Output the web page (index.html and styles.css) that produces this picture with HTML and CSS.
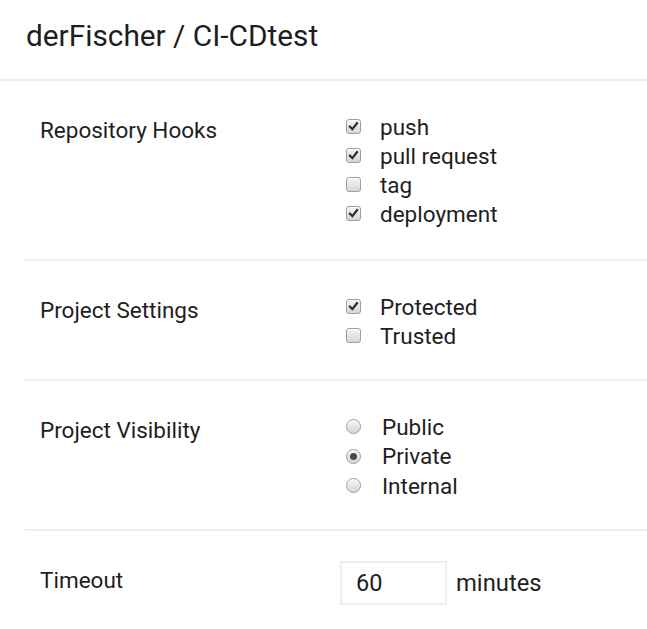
FILE: index.html
```html
<!DOCTYPE html>
<html>
<head>
<meta charset="utf-8">
<link rel="stylesheet" href="styles.css">
</head>
<body>
<header class="header">derFischer / CI-CDtest</header>
<main class="settings">
  <section class="section s-hooks">
    <div class="label">Repository Hooks</div>
    <div class="options">
      <div class="opt"><span class="box"><svg viewBox="0 0 14 14"><path d="M3.2 7.2 L5.8 9.8 L10.8 3.4"/></svg></span><span class="txt">push</span></div>
      <div class="opt"><span class="box"><svg viewBox="0 0 14 14"><path d="M3.2 7.2 L5.8 9.8 L10.8 3.4"/></svg></span><span class="txt">pull request</span></div>
      <div class="opt"><span class="box"></span><span class="txt">tag</span></div>
      <div class="opt"><span class="box"><svg viewBox="0 0 14 14"><path d="M3.2 7.2 L5.8 9.8 L10.8 3.4"/></svg></span><span class="txt">deployment</span></div>
    </div>
  </section>
  <section class="section s-project">
    <div class="label">Project Settings</div>
    <div class="options">
      <div class="opt"><span class="box"><svg viewBox="0 0 14 14"><path d="M3.2 7.2 L5.8 9.8 L10.8 3.4"/></svg></span><span class="txt">Protected</span></div>
      <div class="opt"><span class="box"></span><span class="txt">Trusted</span></div>
    </div>
  </section>
  <section class="section s-vis">
    <div class="label">Project Visibility</div>
    <div class="options">
      <div class="opt radio-opt"><span class="radio"></span><span class="txt">Public</span></div>
      <div class="opt radio-opt"><span class="radio on"></span><span class="txt">Private</span></div>
      <div class="opt radio-opt"><span class="radio"></span><span class="txt">Internal</span></div>
    </div>
  </section>
  <section class="section s-timeout">
    <div class="label">Timeout</div>
    <div class="timeout">
      <div class="input">60</div>
      <span class="unit">minutes</span>
    </div>
  </section>
</main>
</body>
</html>
```

FILE: styles.css
```css
html, body {
  margin: 0;
  padding: 0;
  background: #fff;
}
body {
  font-family: Roboto, "Noto Sans", sans-serif;
  color: #1e1e1e;
  width: 647px;
  overflow: hidden;
}
.header {
  height: 81px;
  box-sizing: border-box;
  padding: 18px 0 0 26px;
  font-size: 29.8px;
  line-height: 36px;
  border-bottom: 2px solid #eceff1;
}
.settings {
  margin-left: 25px;
}
.section {
  display: flex;
  align-items: flex-start;
  box-sizing: border-box;
  padding-top: 31px;
  border-bottom: 2px solid #eceff1;
}
.s-hooks { height: 180px; }
.s-project { height: 120px; }
.s-vis { height: 150px; }
.s-timeout { height: 98px; border-bottom: none; }
.label {
  width: 300px;
  padding-left: 15px;
  margin-top: 3px;
  font-size: 22.5px;
  line-height: 30px;
}
.options {
  display: flex;
  flex-direction: column;
}
.opt {
  display: flex;
  align-items: center;
  height: 29px;
  font-size: 22.5px;
}
.radio-opt { height: 29.5px; }
.box, .radio {
  width: 13px;
  height: 13px;
  border: 1px solid #9e9e9e;
  border-radius: 3px;
  background: linear-gradient(#f5f5f5, #d6d6d6);
  margin-left: 6px;
  margin-right: 19px;
  flex: none;
  display: flex;
  box-shadow: inset 0 1px 0 #fff;
}
.box svg {
  width: 13px;
  height: 13px;
}
.box svg path {
  fill: none;
  stroke: #2e2e2e;
  stroke-width: 2.4;
  stroke-linecap: square;
}
.radio {
  border-radius: 50%;
  margin-right: 21px;
  align-items: center;
  justify-content: center;
}
.radio.on::after {
  content: "";
  width: 7px;
  height: 7px;
  border-radius: 50%;
  background: #4a4a4a;
}
.timeout {
  display: flex;
  align-items: center;
  margin-top: -1px;
}
.input {
  width: 107px;
  height: 44px;
  box-sizing: border-box;
  border: 2px solid #eceff1;
  padding-left: 14px;
  font-size: 23.5px;
  line-height: 40px;
}
.unit {
  margin-left: 9px;
  font-size: 23.8px;
}
```
